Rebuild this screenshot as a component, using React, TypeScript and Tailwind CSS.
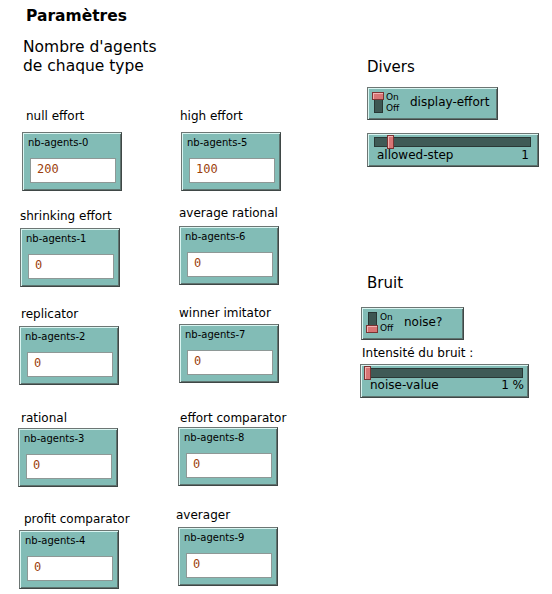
import React from "react";

type Field = {
  label: string;
  name: string;
  value: string;
  labelCls: string;
  boxCls: string;
};

const leftFields: Field[] = [
  { label: "null effort", name: "nb-agents-0", value: "200", labelCls: "mt-[33px] ml-[26px]", boxCls: "mt-[8px] ml-[22px]" },
  { label: "shrinking effort", name: "nb-agents-1", value: "0", labelCls: "mt-[18px] ml-[20px]", boxCls: "mt-[4px] ml-[20px]" },
  { label: "replicator", name: "nb-agents-2", value: "0", labelCls: "mt-[20px] ml-[21px]", boxCls: "mt-[4px] ml-[19px]" },
  { label: "rational", name: "nb-agents-3", value: "0", labelCls: "mt-[26px] ml-[21px]", boxCls: "mt-[2px] ml-[18px]" },
  { label: "profit comparator", name: "nb-agents-4", value: "0", labelCls: "mt-[25px] ml-[24px]", boxCls: "mt-[3px] ml-[19px]" },
];

const midFields: Field[] = [
  { label: "high effort", name: "nb-agents-5", value: "100", labelCls: "mt-[109px] ml-[20px]", boxCls: "mt-[8px] ml-[21px]" },
  { label: "average rational", name: "nb-agents-6", value: "0", labelCls: "mt-[15px] ml-[19px]", boxCls: "mt-[5px] ml-[19px]" },
  { label: "winner imitator", name: "nb-agents-7", value: "0", labelCls: "mt-[21px] ml-[19px]", boxCls: "mt-[3px] ml-[19px]" },
  { label: "effort comparator", name: "nb-agents-8", value: "0", labelCls: "mt-[28px] ml-[20px]", boxCls: "mt-[1px] ml-[18px]" },
  { label: "averager", name: "nb-agents-9", value: "0", labelCls: "mt-[22px] ml-[16px]", boxCls: "mt-[4px] ml-[18px]" },
];

// netlogo-ish raised widget frame
const frame =
  "border border-[#6d7674] border-r-[#3f4746] border-b-[#3f4746] bg-[#82bcb6] shadow-[inset_1px_1px_0_#d9f5f1,inset_-1px_-1px_0_#5f7470]";
const knob =
  "bg-[#d87575] border border-[#7a3333] shadow-[inset_1px_1px_0_#f3b3b3]";

const InputBox = ({ f }: { f: Field }) => (
  <>
    <div className={`text-[12px] leading-[15px] whitespace-nowrap ${f.labelCls}`}>{f.label}</div>
    <div className={`w-[100px] h-[59px] pt-[4px] pl-[5px] ${frame} ${f.boxCls}`}>
      <div className="text-[10px] leading-[12px]">{f.name}</div>
      <div className="mt-[9px] ml-[2px] w-[86px] h-[25px] bg-white border border-[#8e9896] pl-[6px] pt-[3px] font-['DejaVu_Sans_Mono',monospace] text-[12px] leading-[15px] text-[#9c3f0d]">
        {f.value}
      </div>
    </div>
  </>
);

const Switch = ({ on, label, cls }: { on: boolean; label: string; cls: string }) => (
  <div className={`h-[33px] pt-[4px] pl-[4px] flex items-start ${frame} ${cls}`}>
    <div className="relative w-[12px] h-[21px]">
      <div className="absolute left-[2px] top-0 w-[9px] h-[21px] bg-[#3d5652] border border-[#283634]" />
      <div className={`absolute left-0 w-[12px] h-[8px] ${knob} ${on ? "top-0" : "bottom-0"}`} />
    </div>
    <div className="ml-[2px] w-[16px] text-[9px] leading-[11px]">
      <div>On</div>
      <div>Off</div>
    </div>
    <div className="ml-[8px] mt-[3px] text-[12px] leading-[15px] whitespace-nowrap">{label}</div>
  </div>
);

type SliderProps = {
  cls: string;
  trackCls: string;
  knobCls: string;
  textCls: string;
  name: string;
  value: string;
};

const Slider = ({ cls, trackCls, knobCls, textCls, name, value }: SliderProps) => (
  <div className={`h-[34px] pt-[3px] ${frame} ${cls}`}>
    <div className={`relative h-[10px] bg-[#3f5a56] border border-[#2a3836] ${trackCls}`}>
      <div className={`absolute top-[-3px] w-[7px] h-[14px] ${knob} ${knobCls}`} />
    </div>
    <div className={`flex justify-between text-[12px] leading-[15px] ${textCls}`}>
      <span>{name}</span>
      <span>{value}</span>
    </div>
  </div>
);

export default function App() {
  return (
    <div className="w-[552px] h-[594px] bg-white text-black font-['DejaVu_Sans',sans-serif] flex overflow-hidden">
      <div className="w-[160px] flex flex-col items-start">
        <div className="mt-[7px] ml-[26px] text-[15.5px] leading-[19px] font-bold">Paramètres</div>
        <div className="mt-[12px] ml-[23px] text-[15.5px] leading-[19px] whitespace-nowrap">
          Nombre d'agents
          <br />
          de chaque type
        </div>
        {leftFields.map((f) => (
          <InputBox key={f.name} f={f} />
        ))}
      </div>

      <div className="w-[190px] flex flex-col items-start">
        {midFields.map((f) => (
          <InputBox key={f.name} f={f} />
        ))}
      </div>

      <div className="flex-1 flex flex-col items-start">
        <div className="mt-[58px] ml-[17px] text-[15px] leading-[19px]">Divers</div>
        <Switch on label="display-effort" cls="mt-[10px] ml-[17px] w-[131px]" />
        <Slider
          cls="mt-[13px] ml-[17px] w-[172px]"
          trackCls="ml-[6px] w-[157px]"
          knobCls="left-[12px]"
          textCls="mt-[1px] pl-[9px] pr-[9px]"
          name="allowed-step"
          value="1"
        />

        <div className="mt-[107px] ml-[17px] text-[15px] leading-[19px]">Bruit</div>
        <Switch on={false} label="noise?" cls="mt-[14px] ml-[11px] w-[103px]" />
        <div className="mt-[6px] ml-[12px] text-[12px] leading-[15px] whitespace-nowrap">Intensité du bruit :</div>
        <Slider
          cls="mt-[3px] ml-[10px] w-[169px]"
          trackCls="ml-[3px] w-[159px]"
          knobCls="left-[-1px]"
          textCls="pl-[9px] pr-[4px]"
          name="noise-value"
          value="1 %"
        />
      </div>
    </div>
  );
}
